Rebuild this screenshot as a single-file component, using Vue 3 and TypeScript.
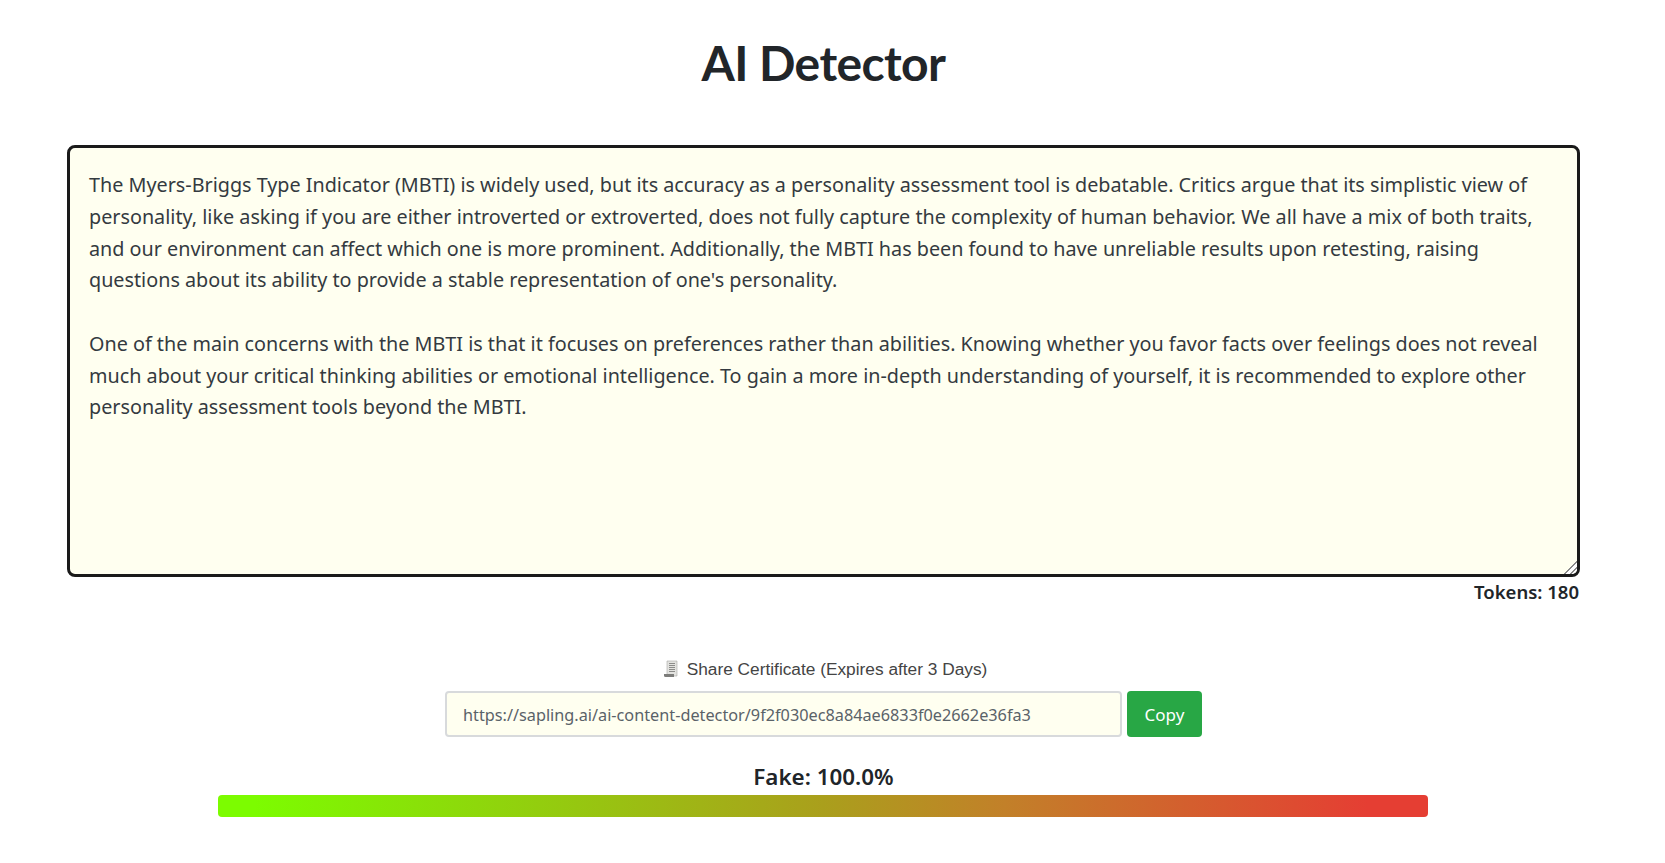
<template>
  <div class="page">
    <h1 class="title">AI Detector</h1>

    <div class="editor">
      <p v-for="(para, i) in paragraphs" :key="i" class="para">{{ para }}</p>
    </div>
    <div class="tokens">Tokens: {{ tokens }}</div>

    <div class="share">
      <div class="share-label">
        <svg class="receipt" width="14" height="18" viewBox="0 0 14 18" aria-hidden="true">
          <path d="M3 1h10v15H3z" fill="#e3e3e0" stroke="#a9a9a6" stroke-width=".6" />
          <path d="M5 3.500h6M5 5.500h6M5 7.500h6M5 9.500h6M5 11.500h6" stroke="#8c8c8a" stroke-width="1" />
          <path d="M0 14h10v3H1.500A1.500 1.500 0 0 1 0 15.500z" fill="#7d7d7b" />
        </svg>
        <span>Share Certificate (Expires after 3 Days)</span>
      </div>
      <div class="share-row">
        <input class="share-input" type="text" readonly :value="shareUrl" />
        <button class="copy-btn" type="button">Copy</button>
      </div>
    </div>

    <div class="score">
      <div class="score-label">Fake: {{ fake.toFixed(1) }}%</div>
      <div class="bar"></div>
    </div>
  </div>
</template>

<script setup lang="ts">
const paragraphs: string[] = [
  "The Myers-Briggs Type Indicator (MBTI) is widely used, but its accuracy as a personality assessment tool is debatable. Critics argue that its simplistic view of personality, like asking if you are either introverted or extroverted, does not fully capture the complexity of human behavior. We all have a mix of both traits, and our environment can affect which one is more prominent. Additionally, the MBTI has been found to have unreliable results upon retesting, raising questions about its ability to provide a stable representation of one's personality.",
  "One of the main concerns with the MBTI is that it focuses on preferences rather than abilities. Knowing whether you favor facts over feelings does not reveal much about your critical thinking abilities or emotional intelligence. To gain a more in-depth understanding of yourself, it is recommended to explore other personality assessment tools beyond the MBTI."
]
const tokens = 180
const fake = 100
const shareUrl = 'https://sapling.ai/ai-content-detector/9f2f030ec8a84ae6833f0e2662e36fa3'
</script>

<style>
body {
  background: #fff;
}
</style>

<style scoped>
.page {
  height: 863px;
  box-sizing: border-box;
  padding: 0 85px 0 67px;
  overflow: hidden;
  font-family: "Noto Sans", "Open Sans", sans-serif;
  color: #212529;
}

.title {
  margin: 0;
  padding-top: 33px;
  height: 145px;
  box-sizing: border-box;
  text-align: center;
  font-family: Lato, sans-serif;
  font-size: 48px;
  line-height: 60px;
  font-weight: 700;
  letter-spacing: -0.6px;
}

.editor {
  position: relative;
  height: 432px;
  box-sizing: border-box;
  padding: 21px 19px 15px;
  border: 3px solid #1a1a1a;
  border-radius: 8px;
  background: #fffff0;
  color: #343a40;
  font-size: 19.78px;
  line-height: 31.75px;
  overflow: hidden;
}

/* resize grip in the bottom right corner */
.editor::after {
  content: "";
  position: absolute;
  right: 0;
  bottom: 0;
  width: 13px;
  height: 13px;
  background: linear-gradient(135deg, transparent 49%, #8a8a8a 49%, #8a8a8a 55%, #fff 55%, #fff 71%, #8a8a8a 71%, #8a8a8a 77%, #fff 77%);
}

.para {
  margin: 0 0 31.75px;
}

.tokens {
  margin-top: 3px;
  padding-right: 1px;
  text-align: right;
  font-size: 18.5px;
  line-height: 24px;
  font-weight: 600;
}

.share {
  margin-top: 53px;
  display: flex;
  flex-direction: column;
  align-items: center;
}

.share-label {
  display: flex;
  align-items: center;
  gap: 9px;
  height: 24px;
  padding-left: 4px;
  font-family: "Liberation Sans", Arial, sans-serif;
  font-size: 17.3px;
  color: #444;
}

.share-row {
  margin-top: 10px;
  display: flex;
  gap: 5px;
}

.share-input {
  width: 677px;
  height: 46px;
  box-sizing: border-box;
  padding: 1px 16px 0;
  border: 2px solid #d8dadc;
  border-radius: 4px;
  background: #fffff0;
  color: #5a6268;
  font-family: "Noto Sans", sans-serif;
  font-size: 16.25px;
  outline: none;
}

.copy-btn {
  width: 75px;
  height: 46px;
  border: none;
  border-radius: 4px;
  background: #28a745;
  color: #fff;
  font-family: "Noto Sans", sans-serif;
  font-size: 17px;
}

.score {
  margin-top: 25px;
  display: flex;
  flex-direction: column;
  align-items: center;
}

.score-label {
  font-size: 22.4px;
  line-height: 30px;
  font-weight: 600;
}

.bar {
  width: 1210px;
  height: 22px;
  margin-top: 3px;
  margin-right: 1px;
  border-radius: 4px;
  background: linear-gradient(to right, #7cfc00 3%, #aa9f1c 50%, #c28029 65%, #e53e33 95%);
}
</style>
